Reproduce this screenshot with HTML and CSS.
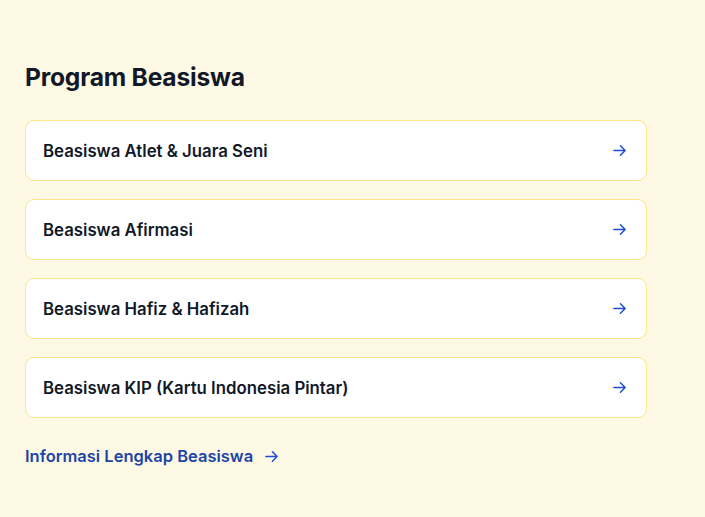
FILE: index.html
```html
<!DOCTYPE html>
<html lang="id">
<head>
<meta charset="utf-8">
<link rel="stylesheet" href="styles.css">
</head>
<body>
<section class="section">
  <h2 class="title">Program Beasiswa</h2>
  <ul class="list">
    <li><a class="card" href="#"><span>Beasiswa Atlet &amp; Juara Seni</span><svg class="arrow" viewBox="0 0 24 24"><path d="M13.5 4.5 21 12m0 0-7.5 7.5M21 12H3"/></svg></a></li>
    <li><a class="card" href="#"><span>Beasiswa Afirmasi</span><svg class="arrow" viewBox="0 0 24 24"><path d="M13.5 4.5 21 12m0 0-7.5 7.5M21 12H3"/></svg></a></li>
    <li><a class="card" href="#"><span>Beasiswa Hafiz &amp; Hafizah</span><svg class="arrow" viewBox="0 0 24 24"><path d="M13.5 4.5 21 12m0 0-7.5 7.5M21 12H3"/></svg></a></li>
    <li><a class="card" href="#"><span>Beasiswa KIP (Kartu Indonesia Pintar)</span><svg class="arrow" viewBox="0 0 24 24"><path d="M13.5 4.5 21 12m0 0-7.5 7.5M21 12H3"/></svg></a></li>
  </ul>
  <a class="more" href="#"><span>Informasi Lengkap Beasiswa</span><svg class="arrow" viewBox="0 0 24 24"><path d="M13.5 4.5 21 12m0 0-7.5 7.5M21 12H3"/></svg></a>
</section>
</body>
</html>
```
FILE: styles.css
```css
html, body {
  margin: 0;
  padding: 0;
  background: #fef9e5;
  font-family: Inter, "Noto Sans", sans-serif;
  color: #111827;
}
.section {
  width: 622px;
  padding: 60px 25px 0;
}
.title {
  margin: 0 0 26px;
  font-size: 24.6px;
  font-weight: 700;
  line-height: 34px;
  letter-spacing: -0.2px;
}
.list {
  list-style: none;
  margin: 0;
  padding: 0;
  display: flex;
  flex-direction: column;
  gap: 18px;
}
.card {
  display: flex;
  align-items: center;
  justify-content: space-between;
  height: 59px;
  padding: 0 17px;
  background: #ffffff;
  border: 1px solid #fde68a;
  border-radius: 9px;
  text-decoration: none;
  color: #111827;
  font-size: 16.8px;
  font-weight: 600;
}
.card .arrow {
  width: 15px;
  height: 15px;
  margin-right: 2px;
}
.arrow {
  fill: none;
  stroke: #1d4ed8;
  stroke-width: 2.4;
  stroke-linecap: round;
  stroke-linejoin: round;
}
.more {
  display: inline-flex;
  align-items: center;
  gap: 11px;
  margin-top: 28px;
  color: #1c45a8;
  font-size: 16.5px;
  font-weight: 600;
  text-decoration: none;
}
.more .arrow {
  width: 15px;
  height: 15px;
}
```
